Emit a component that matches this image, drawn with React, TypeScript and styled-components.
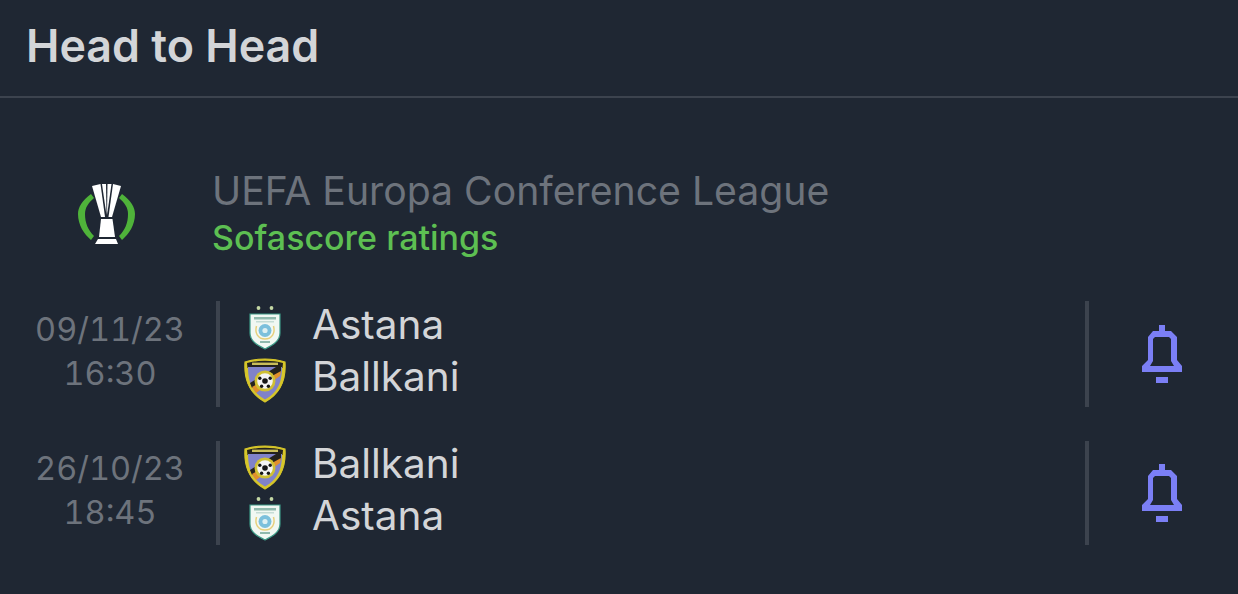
import React from 'react';
import styled, { createGlobalStyle } from 'styled-components';

const GlobalStyle = createGlobalStyle`
  html, body {
    margin: 0;
    padding: 0;
    background: #1f2733;
  }
  body {
    font-family: Inter, "Liberation Sans", sans-serif;
    overflow: hidden;
  }
`;

const Page = styled.div`
  width: 1238px;
  height: 594px;
  background: #1f2733;
  overflow: hidden;
`;

const Header = styled.header`
  height: 96px;
  padding-left: 26px;
  display: flex;
  align-items: center;
  border-bottom: 2px solid #3c434e;
`;

const Title = styled.h1`
  margin: 0 0 4px;
  font-size: 44.8px;
  line-height: 50px;
  font-weight: 600;
  color: #d3d5d8;
`;

const League = styled.section`
  display: flex;
  align-items: center;
  height: 96px;
  margin: 68px 0 39px;
`;

const LeagueLogo = styled.div`
  width: 212px;
  padding-left: 2px;
  box-sizing: border-box;
  display: flex;
  justify-content: center;
`;

const LeagueText = styled.div`
  display: flex;
  flex-direction: column;
`;

const LeagueName = styled.div`
  font-size: 39.2px;
  line-height: 48px;
  color: #6d737c;
`;

const Ratings = styled.div`
  font-size: 34px;
  line-height: 46px;
  font-weight: 500;
  color: #5dbf52;
`;

const Match = styled.div<{ $height: number }>`
  display: flex;
  align-items: stretch;
  height: ${(p) => p.$height}px;
  margin-bottom: 34px;
`;

const DateCol = styled.div`
  width: 216px;
  padding: 0 0 5px 4px;
  box-sizing: border-box;
  display: flex;
  flex-direction: column;
  justify-content: center;
  align-items: center;
  font-size: 32.5px;
  line-height: 44px;
  font-feature-settings: 'tnum';
  color: #6d737c;
`;

const Divider = styled.div`
  width: 4px;
  background: #3c434e;
`;

const Teams = styled.div`
  flex: 1;
  padding-left: 23px;
  display: flex;
  flex-direction: column;
  justify-content: center;
  gap: 2px;
`;

const TeamRow = styled.div`
  display: flex;
  align-items: center;
  height: 50px;
  gap: 25px;
  font-size: 40.5px;
  color: #d3d5d8;
`;

const TeamName = styled.span`
  margin-bottom: 8px;
`;

const CrestBox = styled.div`
  width: 44px;
  height: 50px;
  display: flex;
  align-items: center;
  justify-content: center;
  filter: blur(0.5px);
`;

const Bell = styled.div`
  width: 149px;
  padding-right: 3px;
  box-sizing: border-box;
  display: flex;
  align-items: center;
  justify-content: center;
`;

const TrophyLogo = () => (
  <svg width="60" height="62" viewBox="0 0 60 62">
    <path d="M14 11 C5 18 1 24 1 31 C1 42 7 51 14 57 L17 53 C11 47 8 40 8 31 C8 25 11 20 17 15 Z" fill="#4fb33a" />
    <path d="M45 11 C54 18 58 24 58 31 C58 42 52 51 45 57 L42 53 C48 47 51 40 51 31 C51 25 48 20 42 15 Z" fill="#4fb33a" />
    <path d="M15 3 L23.5 1 L28 34 L24 34 Z" fill="#fff" />
    <path d="M25 1 L29 1 L29.5 32 L28 22 Z" fill="#fff" />
    <path d="M30.5 1 L34.5 1 L31.5 22 L30 32 Z" fill="#fff" />
    <path d="M36 1 L44 3 L35 34 L31.5 34 Z" fill="#fff" />
    <path d="M24 36 L35.5 36 L38 54 L22 54 Z" fill="#fff" />
    <path d="M21 56 L39 56 L41 61 L18 61 Z" fill="#fff" />
  </svg>
);

const AstanaCrest = () => (
  <svg width="36" height="44" viewBox="0 0 36 44">
    <circle cx="11.5" cy="2" r="1.9" fill="#c4d8a4" />
    <circle cx="24.5" cy="2" r="1.9" fill="#c4d8a4" />
    <path d="M3 8 H33 V27 C33 35 26 39 18 43 C10 39 3 35 3 27 Z" fill="#f1f8f3" stroke="#3d9a87" strokeWidth="1.2" />
    <rect x="7" y="11" width="22" height="2.5" fill="#8fb9ad" />
    <rect x="9" y="15" width="18" height="1.5" fill="#c5dcd5" />
    <path d="M9.5 20 C7.5 27 11 33 18 33 C25 33 28.5 27 26.5 20" fill="none" stroke="#e6cf7c" strokeWidth="1.5" />
    <circle cx="18" cy="24.5" r="6.5" fill="#7cc0dc" />
    <circle cx="18" cy="24.5" r="2.6" fill="#dff0f2" />
    <rect x="13" y="35" width="10" height="2" fill="#8fb9ad" />
  </svg>
);

const BallkaniCrest = () => (
  <svg width="42" height="46" viewBox="0 0 42 46">
    <path d="M1 5 C13 1 29 1 41 5 C42 20 39 35 21 45 C3 35 0 20 1 5 Z" fill="#d6c62a" stroke="#d6c62a" strokeWidth="1.2" />
    <path d="M3 6 C14 3 28 3 39 6 L38.5 11 H3.5 Z" fill="#23221d" />
    <rect x="8" y="5.6" width="26" height="2.4" fill="#c9bd5a" />
    <path d="M4 10 H38 C38 23 35 35 21 42.5 C7 35 4 23 4 10 Z" fill="#8082c9" />
    <path d="M32 10 L37 10 L37 15 L8 31 L6 26 Z" fill="#23221d" />
    <path d="M37 14 L36 19 L12 36 L8 30 Z" fill="#e0902c" />
    <circle cx="21" cy="24" r="10.5" fill="#cfc033" />
    <circle cx="21" cy="24" r="7.8" fill="#f4f4f4" />
    <circle cx="21" cy="24" r="2.8" fill="#161616" />
    <circle cx="15.8" cy="21.2" r="1.7" fill="#161616" />
    <circle cx="26.2" cy="21.2" r="1.7" fill="#161616" />
    <circle cx="17.6" cy="29.3" r="1.7" fill="#161616" />
    <circle cx="24.4" cy="29.3" r="1.7" fill="#161616" />
  </svg>
);

const BellIcon = () => (
  <svg width="42" height="59" viewBox="0 0 42 59">
    <rect x="18" y="0" width="6" height="7" fill="#7b7ff5" />
    <path
      d="M1 41 L7 35 V12 L12 6 H30 L36 12 V35 L41 41 V47 H1 Z M9 41 H33 L30 36 V14 L28 12 H14 L12 14 V36 Z"
      fill="#7b7ff5"
      fillRule="evenodd"
    />
    <rect x="15" y="52" width="12" height="6" fill="#7b7ff5" />
  </svg>
);

const crests: Record<string, React.ReactNode> = {
  Astana: <AstanaCrest />,
  Ballkani: <BallkaniCrest />,
};

const matches = [
  { date: '09/11/23', time: '16:30', height: 106, teams: ['Astana', 'Ballkani'] },
  { date: '26/10/23', time: '18:45', height: 104, teams: ['Ballkani', 'Astana'] },
];

export default function App() {
  return (
    <Page>
      <GlobalStyle />
      <Header>
        <Title>Head to Head</Title>
      </Header>
      <League>
        <LeagueLogo>
          <TrophyLogo />
        </LeagueLogo>
        <LeagueText>
          <LeagueName>UEFA Europa Conference League</LeagueName>
          <Ratings>Sofascore ratings</Ratings>
        </LeagueText>
      </League>
      {matches.map((m) => (
        <Match key={m.date} $height={m.height}>
          <DateCol>
            <div>{m.date}</div>
            <div>{m.time}</div>
          </DateCol>
          <Divider />
          <Teams>
            {m.teams.map((t) => (
              <TeamRow key={t}>
                <CrestBox>{crests[t]}</CrestBox>
                <TeamName>{t}</TeamName>
              </TeamRow>
            ))}
          </Teams>
          <Divider />
          <Bell>
            <BellIcon />
          </Bell>
        </Match>
      ))}
    </Page>
  );
}
